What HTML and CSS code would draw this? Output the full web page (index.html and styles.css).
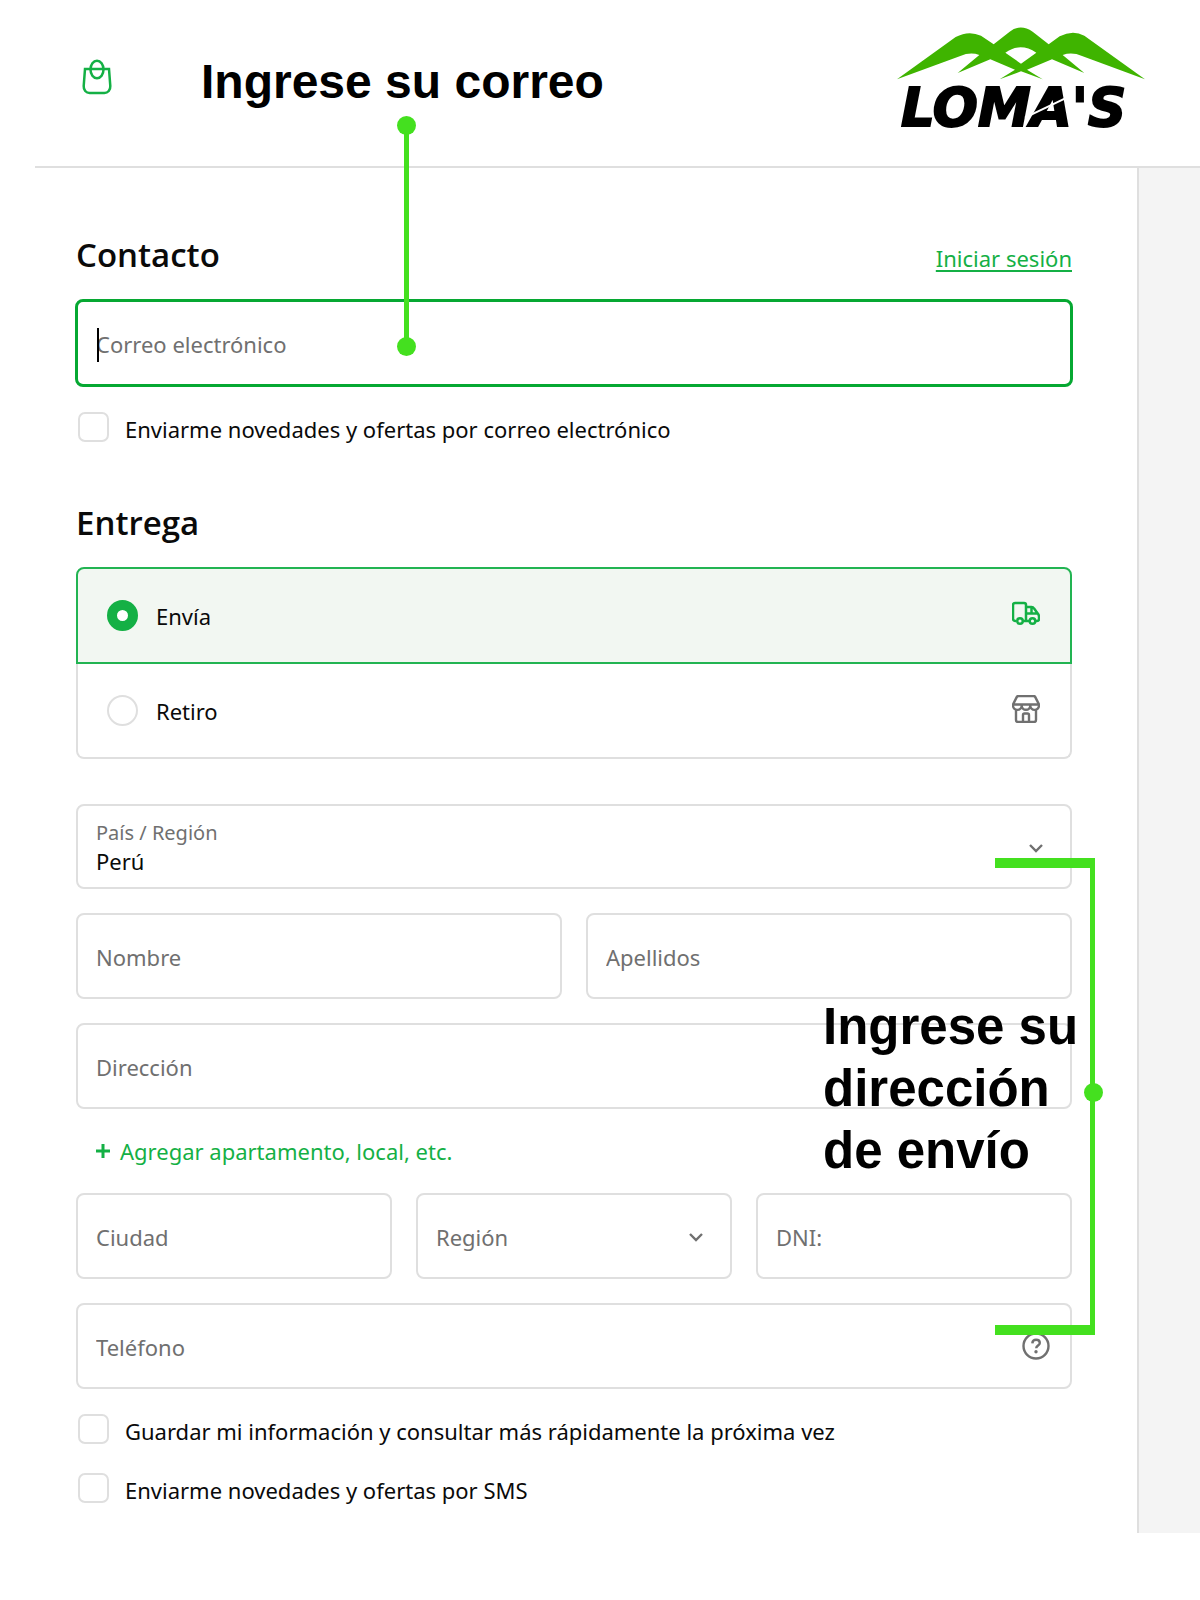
FILE: index.html
```html
<!DOCTYPE html>
<html lang="es">
<head>
<meta charset="utf-8">
<meta name="viewport" content="width=device-width, initial-scale=1">
<title>Loma's - Información de envío</title>
<link rel="stylesheet" href="styles.css">
</head>
<body>
<header class="header">
  <a class="bag" href="#" aria-label="Carrito">
    <svg width="30" height="36" viewBox="0 0 30 36" fill="none" stroke="currentColor" stroke-width="2.500">
      <path d="M3 10h24l1.300 17c.2 4-2.300 7-6 7H7.700c-3.700 0-6.200-3-6-7z"/>
      <ellipse cx="15" cy="10.500" rx="6.500" ry="8.800"/>
    </svg>
  </a>
  <div class="note note-mail">Ingrese su correo<span class="pin"></span></div>
  <a class="logo" href="#" aria-label="Loma's">
    <svg width="248" height="120" viewBox="50 50 744 360">
      <path fill="#3fb400" fill-rule="evenodd" d="M50 207 226 80Q265 59 302 76L340 102 388 64Q420 39 457 64L505 102 538 78Q577 58 612 76L794 207 605 137Q575 124 547 134L612 188 515 147 440 178 487 207 422 183 358 207 404 178 330 147 232 188 297 134Q270 124 240 137ZM375 127Q420 95 468 127L422 160Z"/>
      <text class="wordmark" x="62" y="346">LOMA'S</text>
      <path d="M434 322 572 256" stroke="#fff" stroke-width="6"/>
    </svg>
  </a>
</header>

<div class="layout">
  <main class="checkout">
    <form>
      <section>
        <div class="heading-row">
          <h2>Contacto</h2>
          <a class="login" href="#">Iniciar sesión</a>
        </div>
        <div class="field field-active">
          <input type="email" placeholder="Correo electrónico" aria-label="Correo electrónico">
          <span class="caret"></span>
        </div>
        <label class="check"><input type="checkbox">Enviarme novedades y ofertas por correo electrónico</label>
      </section>

      <section class="delivery">
        <h2>Entrega</h2>
        <div class="options">
          <label class="option option-on">
            <input type="radio" name="delivery" checked>
            <span>Envía</span>
            <svg width="28" height="28" viewBox="0 0 28 28" fill="none" stroke="currentColor" stroke-width="2.500" stroke-linejoin="round">
              <path d="M4 21H3.500A2.500 2.500 0 0 1 1 18.500V5a2 2 0 0 1 2-2h9a2 2 0 0 1 2 2v16h-2.500M14 7h5.500c1.200 0 2 .6 2.600 1.600l4 5.400c.6.800.9 1.500.9 2.500v2.500a2 2 0 0 1-2 2h-1.500M17.500 21H14M14 13.500h11.500M19.500 7v6.500"/>
              <circle cx="8" cy="21" r="2.800"/><circle cx="20.500" cy="21" r="2.800"/>
            </svg>
          </label>
          <label class="option">
            <input type="radio" name="delivery">
            <span>Retiro</span>
            <svg width="28" height="28" viewBox="0 0 28 28" fill="none" stroke="currentColor" stroke-width="2.400" stroke-linejoin="round">
              <path d="M6.500 1h15a2 2 0 0 1 1.800 1.100L27 9.500H1l3.700-7.400A2 2 0 0 1 6.500 1zM1 9.500v1a4.300 4.300 0 0 0 8.700 0v-1M9.700 10.500a4.300 4.300 0 0 0 8.600 0v-1M18.300 10.500a4.300 4.300 0 0 0 8.700 0v-1M4 14.500V25a2 2 0 0 0 2 2h16a2 2 0 0 0 2-2V14.500M11 27v-7a1.500 1.500 0 0 1 1.500-1.500h3A1.500 1.500 0 0 1 17 20v7"/>
            </svg>
          </label>
        </div>
      </section>

      <section class="address">
        <div class="field field-labelled">
          <label for="country">País / Región</label>
          <select id="country"><option>Perú</option></select>
          <svg class="chevron" width="14" height="9" viewBox="0 0 14 9" fill="none" stroke="currentColor" stroke-width="2.400"><path d="M1 1l6 6 6-6"/></svg>
        </div>
        <div class="row">
          <div class="field"><input type="text" placeholder="Nombre" aria-label="Nombre"></div>
          <div class="field"><input type="text" placeholder="Apellidos" aria-label="Apellidos"></div>
        </div>
        <div class="field"><input type="text" placeholder="Dirección" aria-label="Dirección"></div>
        <button class="add" type="button">
          <svg width="14" height="14" viewBox="0 0 14 14" stroke="currentColor" stroke-width="3"><path d="M7 0v14M0 7h14"/></svg>
          Agregar apartamento, local, etc.
        </button>
        <div class="row">
          <div class="field"><input type="text" placeholder="Ciudad" aria-label="Ciudad"></div>
          <div class="field">
            <select class="empty" aria-label="Región"><option>Región</option></select>
            <svg class="chevron" width="14" height="9" viewBox="0 0 14 9" fill="none" stroke="currentColor" stroke-width="2.400"><path d="M1 1l6 6 6-6"/></svg>
          </div>
          <div class="field"><input type="text" placeholder="DNI:" aria-label="DNI"></div>
        </div>
        <div class="field">
          <input type="tel" placeholder="Teléfono" aria-label="Teléfono">
          <svg class="help" width="28" height="28" viewBox="0 0 28 28" fill="none" stroke="currentColor" stroke-width="2.400"><circle cx="14" cy="14" r="12.500"/><path d="M10.300 11.300c.2-2.300 1.700-3.500 3.800-3.500 2.200 0 3.700 1.200 3.700 3.100 0 2.600-3.600 2.700-3.600 5.400"/><circle cx="14" cy="19.800" r="1.700" fill="currentColor" stroke="none"/></svg>
        </div>
        <div class="note note-address">Ingrese su<br>dirección<br>de envío</div>
        <div class="bracket"><span class="knob"></span></div>
      </section>

      <label class="check">
        <input type="checkbox">Guardar mi información y consultar más rápidamente la próxima vez
      </label>
      <label class="check"><input type="checkbox">Enviarme novedades y ofertas por SMS</label>
    </form>
  </main>
  <aside class="summary"></aside>
</div>
</body>
</html>
```

FILE: styles.css
```css
* {
  box-sizing: border-box;
}

:root {
  --green: #14b045;
  --note: #44e01f;
  --line: #dfdfdf;
  --muted: #707070;
}

body {
  margin: 0;
  background: #fff;
  color: #0a0a0a;
  font: 22px/30px "Noto Sans", "Open Sans", sans-serif;
}

input,
select,
button {
  margin: 0;
  font: inherit;
  color: inherit;
}

h2 {
  margin: 0;
  font-family: "Open Sans", "Noto Sans", sans-serif;
  font-size: 33px;
  line-height: 48px;
  font-weight: 600;
}

/* Header */
.header {
  display: flex;
  align-items: center;
  height: 168px;
  margin-left: 35px;
  padding: 0 55px 12px 47px;
  border-bottom: 2px solid var(--line);
}

.bag {
  display: flex;
  color: var(--green);
}

.logo {
  display: flex;
  margin: 20px 0 0 auto;
}

.wordmark {
  font: italic bold 159px "DejaVu Sans", sans-serif;
  fill: #000;
  stroke: #000;
  stroke-width: 6px;
}

/* Instruction callouts */
.note {
  color: #000;
  font-family: "Liberation Sans", Arial, sans-serif;
  font-weight: bold;
}

.note-mail {
  position: relative;
  margin: 10px 0 0 89px;
  font-size: 48px;
  line-height: 56px;
}

.pin {
  position: absolute;
  z-index: 2;
  top: 71px;
  left: 203px;
  width: 5px;
  height: 222px;
  background: var(--note);
}

.pin::before,
.pin::after,
.knob {
  content: "";
  position: absolute;
  left: -7px;
  width: 19px;
  height: 19px;
  border-radius: 50%;
  background: var(--note);
}

.pin::before {
  top: -9px;
}

.pin::after {
  bottom: -9px;
}

.note-address {
  position: absolute;
  top: 192px;
  right: -7px;
  width: 256px;
  font-size: 51px;
  line-height: 62px;
  white-space: nowrap;
}

.bracket {
  position: absolute;
  top: 54px;
  right: -23px;
  bottom: 54px;
  width: 100px;
  border: solid var(--note);
  border-width: 10px 5px 10px 0;
  pointer-events: none;
}

.knob {
  top: calc(50% - 14px);
  left: auto;
  right: -13px;
}

/* Page columns */
.layout {
  display: flex;
}

.checkout {
  flex: 1;
  min-width: 0;
  padding: 63px 65px 26px 76px;
}

.summary {
  width: 63px;
  background: #f4f4f4;
  border-left: 2px solid var(--line);
}

.heading-row {
  display: flex;
  justify-content: space-between;
  align-items: baseline;
}

.login {
  color: var(--green);
  text-underline-offset: 3px;
  text-decoration-thickness: 2px;
}

/* Fields */
.field {
  position: relative;
  display: flex;
  flex: 1;
  min-width: 0;
  height: 86px;
  border: 2px solid var(--line);
  border-radius: 8px;
}

.field input,
.field select {
  width: 100%;
  padding: 2px 18px 0;
  border: 0;
  border-radius: 6px;
  outline: 0;
  background: none;
  appearance: none;
}

.field input::placeholder {
  color: var(--muted);
  opacity: 1;
}

.field .empty {
  color: var(--muted);
}

.field-active {
  height: 88px;
  margin: 20px -1px 0;
  border: 3px solid #06a832;
}

.caret {
  position: absolute;
  top: 26px;
  left: 19px;
  width: 2px;
  height: 34px;
  background: #000;
}

.address .field-labelled {
  height: 85px;
}

.field-labelled label {
  position: absolute;
  top: 15px;
  left: 18px;
  color: var(--muted);
  font-size: 20px;
  line-height: 24px;
}

.field .chevron,
.field .help {
  position: absolute;
  top: 50%;
  right: 27px;
  margin-top: -3px;
  color: var(--muted);
  pointer-events: none;
}

.field .help {
  right: 20px;
  margin-top: -14px;
}

.field-labelled select {
  padding-top: 28px;
}

/* Tick boxes */
.check {
  display: flex;
  align-items: flex-start;
  gap: 16px;
  margin-top: 25px;
  padding-left: 2px;
  line-height: 34px;
}

.check input {
  flex: none;
  width: 31px;
  height: 30px;
  border: 2px solid var(--line);
  border-radius: 7px;
  background: #fff;
  appearance: none;
}

.check input:checked {
  background: var(--green);
}

/* Delivery choice */
.delivery {
  margin-top: 53px;
}

.options {
  margin-top: 20px;
}

.option {
  display: flex;
  align-items: center;
  gap: 18px;
  height: 95px;
  padding: 0 30px 0 29px;
  border: solid var(--line);
  border-width: 0 2px 2px;
  border-radius: 0 0 8px 8px;
}

.option-on {
  height: 97px;
  border: 2px solid #22b452;
  border-radius: 8px 8px 0 0;
  background: #f2f7f2;
}

.option input {
  width: 31px;
  height: 31px;
  border: 2px solid var(--line);
  border-radius: 50%;
  background: #fff;
  appearance: none;
}

.option input:checked {
  border: 10px solid var(--green);
}

.option svg {
  margin: 0 0 4px auto;
  color: var(--muted);
}

.option-on svg {
  color: var(--green);
}

/* Address */
.address {
  position: relative;
  display: flex;
  flex-direction: column;
  gap: 24px;
  margin-top: 45px;
}

.address > .field {
  flex: none;
}

.row {
  display: flex;
  gap: 24px;
}

.add {
  display: flex;
  align-items: center;
  align-self: flex-start;
  gap: 10px;
  height: 36px;
  padding: 0 20px;
  border: 0;
  background: none;
  color: var(--green);
}
```
